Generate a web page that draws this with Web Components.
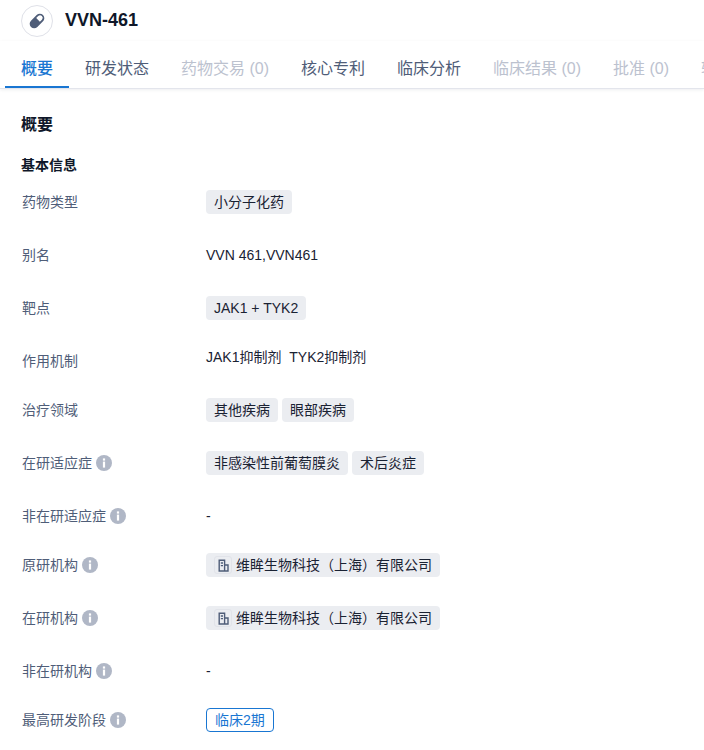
<!DOCTYPE html>
<html>
<head>
<meta charset="utf-8">
<style>
    body {
        margin: 0;
        background: #fff;
        font-family: "Liberation Sans", "Noto Sans CJK SC", sans-serif;
        overflow: hidden;
    }
</style>
</head>
<body>
<drug-header name="VVN-461"></drug-header>
<tab-bar>
    <tab-item active>概要</tab-item>
    <tab-item>研发状态</tab-item>
    <tab-item disabled>药物交易 (0)</tab-item>
    <tab-item>核心专利</tab-item>
    <tab-item>临床分析</tab-item>
    <tab-item disabled>临床结果 (0)</tab-item>
    <tab-item disabled>批准 (0)</tab-item>
    <tab-item disabled>转化医学</tab-item>
</tab-bar>
<overview-panel>
    <info-row label="药物类型"><info-tag>小分子化药</info-tag></info-row>
    <info-row label="别名"><span>VVN 461,VVN461</span></info-row>
    <info-row label="靶点"><info-tag>JAK1 + TYK2</info-tag></info-row>
    <info-row label="作用机制" compact raised><span>JAK1抑制剂&nbsp;&nbsp;TYK2抑制剂</span></info-row>
    <info-row label="治疗领域"><info-tag>其他疾病</info-tag><info-tag>眼部疾病</info-tag></info-row>
    <info-row label="在研适应症" hint><info-tag>非感染性前葡萄膜炎</info-tag><info-tag>术后炎症</info-tag></info-row>
    <info-row label="非在研适应症" hint compact><span>-</span></info-row>
    <info-row label="原研机构" hint><org-tag>维眸生物科技（上海）有限公司</org-tag></info-row>
    <info-row label="在研机构" hint><org-tag>维眸生物科技（上海）有限公司</org-tag></info-row>
    <info-row label="非在研机构" hint compact><span>-</span></info-row>
    <info-row label="最高研发阶段" hint><phase-tag>临床2期</phase-tag></info-row>
</overview-panel>

<script>
class DrugHeader extends HTMLElement {
    constructor() {
        super();
        this.attachShadow({ mode: 'open' });
    }

    connectedCallback() {
        this.shadowRoot.innerHTML = `
            <style>
                :host {
                    display: flex;
                    align-items: center;
                    gap: 12px;
                    height: 41px;
                    padding: 0 21px;
                    box-sizing: border-box;
                }
                .icon {
                    width: 32px;
                    height: 32px;
                    box-sizing: border-box;
                    border: 1px solid #dfe1e8;
                    border-radius: 50%;
                    display: flex;
                    align-items: center;
                    justify-content: center;
                }
                h1 {
                    margin: 0;
                    font-size: 18px;
                    font-weight: 700;
                    color: #0f1729;
                }
            </style>
            <div class="icon">
                <svg width="20" height="20" viewBox="0 0 20 20">
                    <g transform="rotate(-45 10 10)">
                        <rect x="1.5" y="5.5" width="17" height="9" rx="4.5" fill="#4f5d78"/>
                        <path d="M11.5 7.4h2.8a2.6 2.6 0 0 1 0 5.2h-2.8z" fill="#fff"/>
                    </g>
                </svg>
            </div>
            <h1>${this.getAttribute('name')}</h1>
        `;
    }
}

class TabBar extends HTMLElement {
    constructor() {
        super();
        this.attachShadow({ mode: 'open' });
    }

    connectedCallback() {
        this.shadowRoot.innerHTML = `
            <style>
                :host {
                    display: flex;
                    height: 48px;
                    padding-left: 5px;
                    overflow: hidden;
                    box-sizing: border-box;
                    border-bottom: 1px solid #e3e5ec;
                    box-shadow: 0 1px 3px rgba(30, 40, 70, .08);
                }
            </style>
            <slot></slot>
        `;
    }
}

class TabItem extends HTMLElement {
    constructor() {
        super();
        this.attachShadow({ mode: 'open' });
    }

    connectedCallback() {
        this.shadowRoot.innerHTML = `
            <style>
                :host {
                    display: flex;
                    flex: none;
                    align-items: center;
                    box-sizing: border-box;
                    height: 47px;
                    padding: 6px 16px 0;
                    font-size: 16px;
                    white-space: nowrap;
                    color: #4f5d78;
                    border-bottom: 2px solid transparent;
                }
                :host([active]) {
                    color: #1976d2;
                    font-weight: 500;
                    border-bottom-color: #1976d2;
                }
                :host([disabled]) {
                    color: #bcc2cf;
                }
            </style>
            <slot></slot>
        `;
    }
}

class OverviewPanel extends HTMLElement {
    constructor() {
        super();
        this.attachShadow({ mode: 'open' });
    }

    connectedCallback() {
        this.shadowRoot.innerHTML = `
            <style>
                :host {
                    display: block;
                    padding: 0 21px;
                    color: #0f1729;
                }
                h2 {
                    margin: 0;
                    padding-top: 24px;
                    font-size: 16px;
                    line-height: 24px;
                    font-weight: 700;
                }
                h3 {
                    margin: 0;
                    padding: 18px 0 15px;
                    font-size: 14px;
                    line-height: 20px;
                    font-weight: 700;
                }
            </style>
            <h2>概要</h2>
            <h3>基本信息</h3>
            <slot></slot>
        `;
    }
}

class InfoRow extends HTMLElement {
    constructor() {
        super();
        this.attachShadow({ mode: 'open' });
    }

    connectedCallback() {
        const hint = this.hasAttribute('hint') ? `
            <svg width="16" height="16" viewBox="0 0 16 16">
                <circle cx="8" cy="8" r="8" fill="#b0b7c6"/>
                <rect x="6.9" y="3.4" width="2.2" height="2.2" fill="#fff"/>
                <rect x="6.9" y="6.6" width="2.2" height="6" fill="#fff"/>
            </svg>` : '';
        this.shadowRoot.innerHTML = `
            <style>
                :host {
                    display: flex;
                    min-height: 24px;
                    margin-bottom: 29px;
                    padding-left: 1px;
                    font-size: 14px;
                    line-height: 24px;
                }
                :host([compact]) {
                    margin-bottom: 25px;
                }
                .label {
                    flex: none;
                    width: 184px;
                    display: flex;
                    align-items: center;
                    gap: 4px;
                    color: #4f5d78;
                    height: 24px;
                }
                .value {
                    display: flex;
                    gap: 4px;
                    color: #1a2233;
                }
                :host([raised]) .value {
                    margin-top: -4px;
                }
            </style>
            <div class="label"><span>${this.getAttribute('label')}</span>${hint}</div>
            <div class="value"><slot></slot></div>
        `;
    }
}

class InfoTag extends HTMLElement {
    constructor() {
        super();
        this.attachShadow({ mode: 'open' });
    }

    connectedCallback() {
        this.shadowRoot.innerHTML = `
            <style>
                :host {
                    display: block;
                    height: 24px;
                    padding: 0 8px;
                    border-radius: 4px;
                    background: #ebedf1;
                    font-size: 14px;
                    line-height: 24px;
                    color: #1a2233;
                }
            </style>
            <slot></slot>
        `;
    }
}

class OrgTag extends HTMLElement {
    constructor() {
        super();
        this.attachShadow({ mode: 'open' });
    }

    connectedCallback() {
        this.shadowRoot.innerHTML = `
            <style>
                :host {
                    display: flex;
                    align-items: center;
                    gap: 4px;
                    height: 24px;
                    padding: 0 8px;
                    border-radius: 4px;
                    background: #ebedf1;
                    font-size: 14px;
                    color: #1a2233;
                }
                .logo {
                    width: 18px;
                    height: 18px;
                    box-sizing: border-box;
                    border: 1px solid #e1e3e9;
                    border-radius: 3px;
                    display: flex;
                    align-items: center;
                    justify-content: center;
                }
            </style>
            <span class="logo">
                <svg width="13" height="13" viewBox="0 0 13 13" fill="none" stroke="#4f5d78" stroke-width="1.4">
                    <path d="M2.2 12V1.2h5.4V12zM7.6 6h3.4v6H7.6M3.8 4h2.2M3.8 6.6h2.2"/>
                </svg>
            </span>
            <slot></slot>
        `;
    }
}

class PhaseTag extends HTMLElement {
    constructor() {
        super();
        this.attachShadow({ mode: 'open' });
    }

    connectedCallback() {
        this.shadowRoot.innerHTML = `
            <style>
                :host {
                    display: block;
                    height: 24px;
                    box-sizing: border-box;
                    padding: 0 8px;
                    border: 1px solid #1976d2;
                    border-radius: 4px;
                    font-size: 14px;
                    line-height: 22px;
                    color: #1976d2;
                }
            </style>
            <slot></slot>
        `;
    }
}

customElements.define('drug-header', DrugHeader);
customElements.define('tab-bar', TabBar);
customElements.define('tab-item', TabItem);
customElements.define('overview-panel', OverviewPanel);
customElements.define('info-row', InfoRow);
customElements.define('info-tag', InfoTag);
customElements.define('org-tag', OrgTag);
customElements.define('phase-tag', PhaseTag);
</script>
</body>
</html>
